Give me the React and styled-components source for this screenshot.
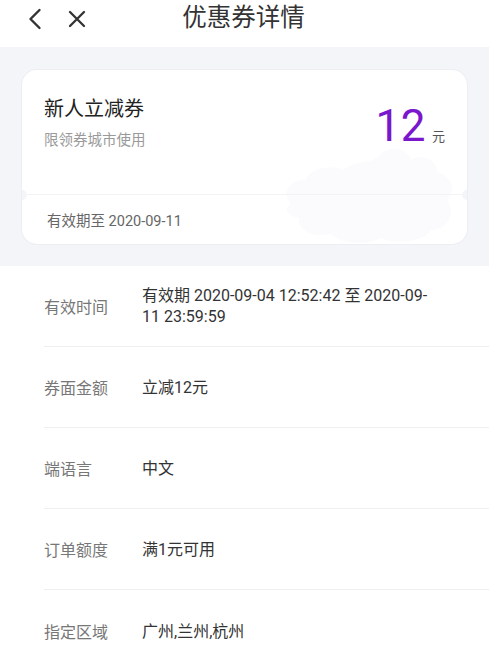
import React from "react";
import styled, { createGlobalStyle } from "styled-components";

const Global = createGlobalStyle`
  html, body { margin: 0; padding: 0; background: #fff; }
  body { font-family: Roboto, "Noto Sans CJK SC", sans-serif; -webkit-font-smoothing: antialiased; }
  * { box-sizing: border-box; }
`;

const Page = styled.div`
  width: 489px;
  min-height: 656px;
  background: #fff;
  overflow: hidden;
`;

const Header = styled.header`
  height: 47px;
  display: flex;
  align-items: center;
  position: relative;
  padding-left: 24px;
  gap: 20px;
`;

const IconBtn = styled.span`
  display: flex;
  align-items: center;
  justify-content: center;
  width: 22px;
  height: 22px;
  color: #333;
  margin-top: -9px;
`;

const Title = styled.h1`
  position: absolute;
  left: 0;
  right: 0;
  top: 2px;
  margin: 0;
  text-align: center;
  font-size: 24.5px;
  font-weight: 400;
  color: #333;
  line-height: 32px;
  pointer-events: none;
  padding-right: 2px;
`;

const Band = styled.section`
  background: #f4f5f9;
  padding: 23px 22px 22px 22px;
`;

const Card = styled.div`
  position: relative;
  background: #fff;
  border-radius: 15px;
  height: 174px;
  display: flex;
  flex-direction: column;
  overflow: hidden;
  box-shadow: 0 0 0 1px #eceef3;
`;

const Notch = styled.span`
  position: absolute;
  top: 120px;
  ${(p) => (p.$side === "left" ? "left: -5px;" : "right: -5px;")}
  width: 10px;
  height: 10px;
  border-radius: 50%;
  background: #f4f5f9;
  z-index: 2;
`;

const Watermark = styled.svg`
  position: absolute;
  right: 6px;
  bottom: 0;
  z-index: 0;
`;

const CardTop = styled.div`
  position: relative;
  z-index: 1;
  height: 125px;
  display: flex;
  justify-content: space-between;
  padding: 25px 20px 0 22px;
  border-bottom: 1px solid #f3f3f6;
`;

const CardInfo = styled.div`
  display: flex;
  flex-direction: column;
`;

const CardName = styled.div`
  font-size: 20px;
  color: #222;
  line-height: 28px;
`;

const CardSub = styled.div`
  font-size: 14.5px;
  color: #9a9a9a;
  margin-top: 8px;
  line-height: 20px;
`;

const Amount = styled.div`
  display: flex;
  align-items: baseline;
  margin-top: 7px;
  margin-right: 2px;
  color: #7a16cc;
`;

const AmountNum = styled.span`
  font-family: Roboto, sans-serif;
  font-size: 44px;
  line-height: 48px;
  letter-spacing: 0.5px;
`;

const AmountUnit = styled.span`
  font-size: 13px;
  color: #555;
  margin-left: 6px;
`;

const CardBottom = styled.div`
  position: relative;
  z-index: 1;
  flex: 1;
  display: flex;
  align-items: center;
  padding: 0 0 0 25px;
  font-size: 14.5px;
  color: #666;
`;

const List = styled.div`
  padding-left: 44px;
`;

const Row = styled.div`
  display: flex;
  align-items: center;
  height: ${(p) => (p.$last ? "66px" : "81px")};
  border-bottom: ${(p) => (p.$last ? "none" : "1px solid #efefef")};
  padding-top: ${(p) => (p.$last ? "16px" : "0")};
`;

const Label = styled.div`
  width: 98px;
  flex-shrink: 0;
  font-size: 16px;
  color: #777;
`;

const Value = styled.div`
  font-size: 16px;
  color: #333;
  line-height: 21px;
`;

const Back = () => (
  <svg width="16" height="22" viewBox="0 0 16 22" fill="none">
    <path d="M12.5 2 L3.5 11 L12.5 20" stroke="#333" strokeWidth="2.4" strokeLinecap="round" strokeLinejoin="round" />
  </svg>
);

const Close = () => (
  <svg width="18" height="18" viewBox="0 0 18 18" fill="none">
    <path d="M2 2 L16 16 M16 2 L2 16" stroke="#333" strokeWidth="2.3" strokeLinecap="round" />
  </svg>
);

const rows = [
  { label: "有效时间", value: ["有效期 2020-09-04 12:52:42 至 2020-09-", "11 23:59:59"] },
  { label: "券面金额", value: ["立减12元"] },
  { label: "端语言", value: ["中文"] },
  { label: "订单额度", value: ["满1元可用"] },
  { label: "指定区域", value: ["广州,兰州,杭州"] },
];

export default function App() {
  return (
    <Page>
      <Global />
      <Header>
        <IconBtn><Back /></IconBtn>
        <IconBtn><Close /></IconBtn>
        <Title>优惠券详情</Title>
      </Header>
      <Band>
        <Card>
          <Notch $side="left" />
          <Notch $side="right" />
          <Watermark width="190" height="110" viewBox="0 0 190 110">
            <path
              d="M20 70 C10 60 18 45 34 46 C40 34 60 30 72 36 C84 26 100 30 108 22 C118 10 136 14 140 26 C150 20 166 24 166 38 C180 42 186 56 176 66 C186 80 176 96 160 96 C150 110 120 110 110 104 C96 112 70 110 60 100 C42 104 26 96 28 84 C16 82 12 74 20 70 Z"
              fill="#fbfafd"
            />
          </Watermark>
          <CardTop>
            <CardInfo>
              <CardName>新人立减券</CardName>
              <CardSub>限领券城市使用</CardSub>
            </CardInfo>
            <Amount>
              <AmountNum>12</AmountNum>
              <AmountUnit>元</AmountUnit>
            </Amount>
          </CardTop>
          <CardBottom>有效期至 2020-09-11</CardBottom>
        </Card>
      </Band>
      <List>
        {rows.map((r, i) => (
          <Row key={r.label} $last={i === rows.length - 1}>
            <Label>{r.label}</Label>
            <Value>
              {r.value.map((line, j) => (
                <div key={j}>{line}</div>
              ))}
            </Value>
          </Row>
        ))}
      </List>
    </Page>
  );
}
